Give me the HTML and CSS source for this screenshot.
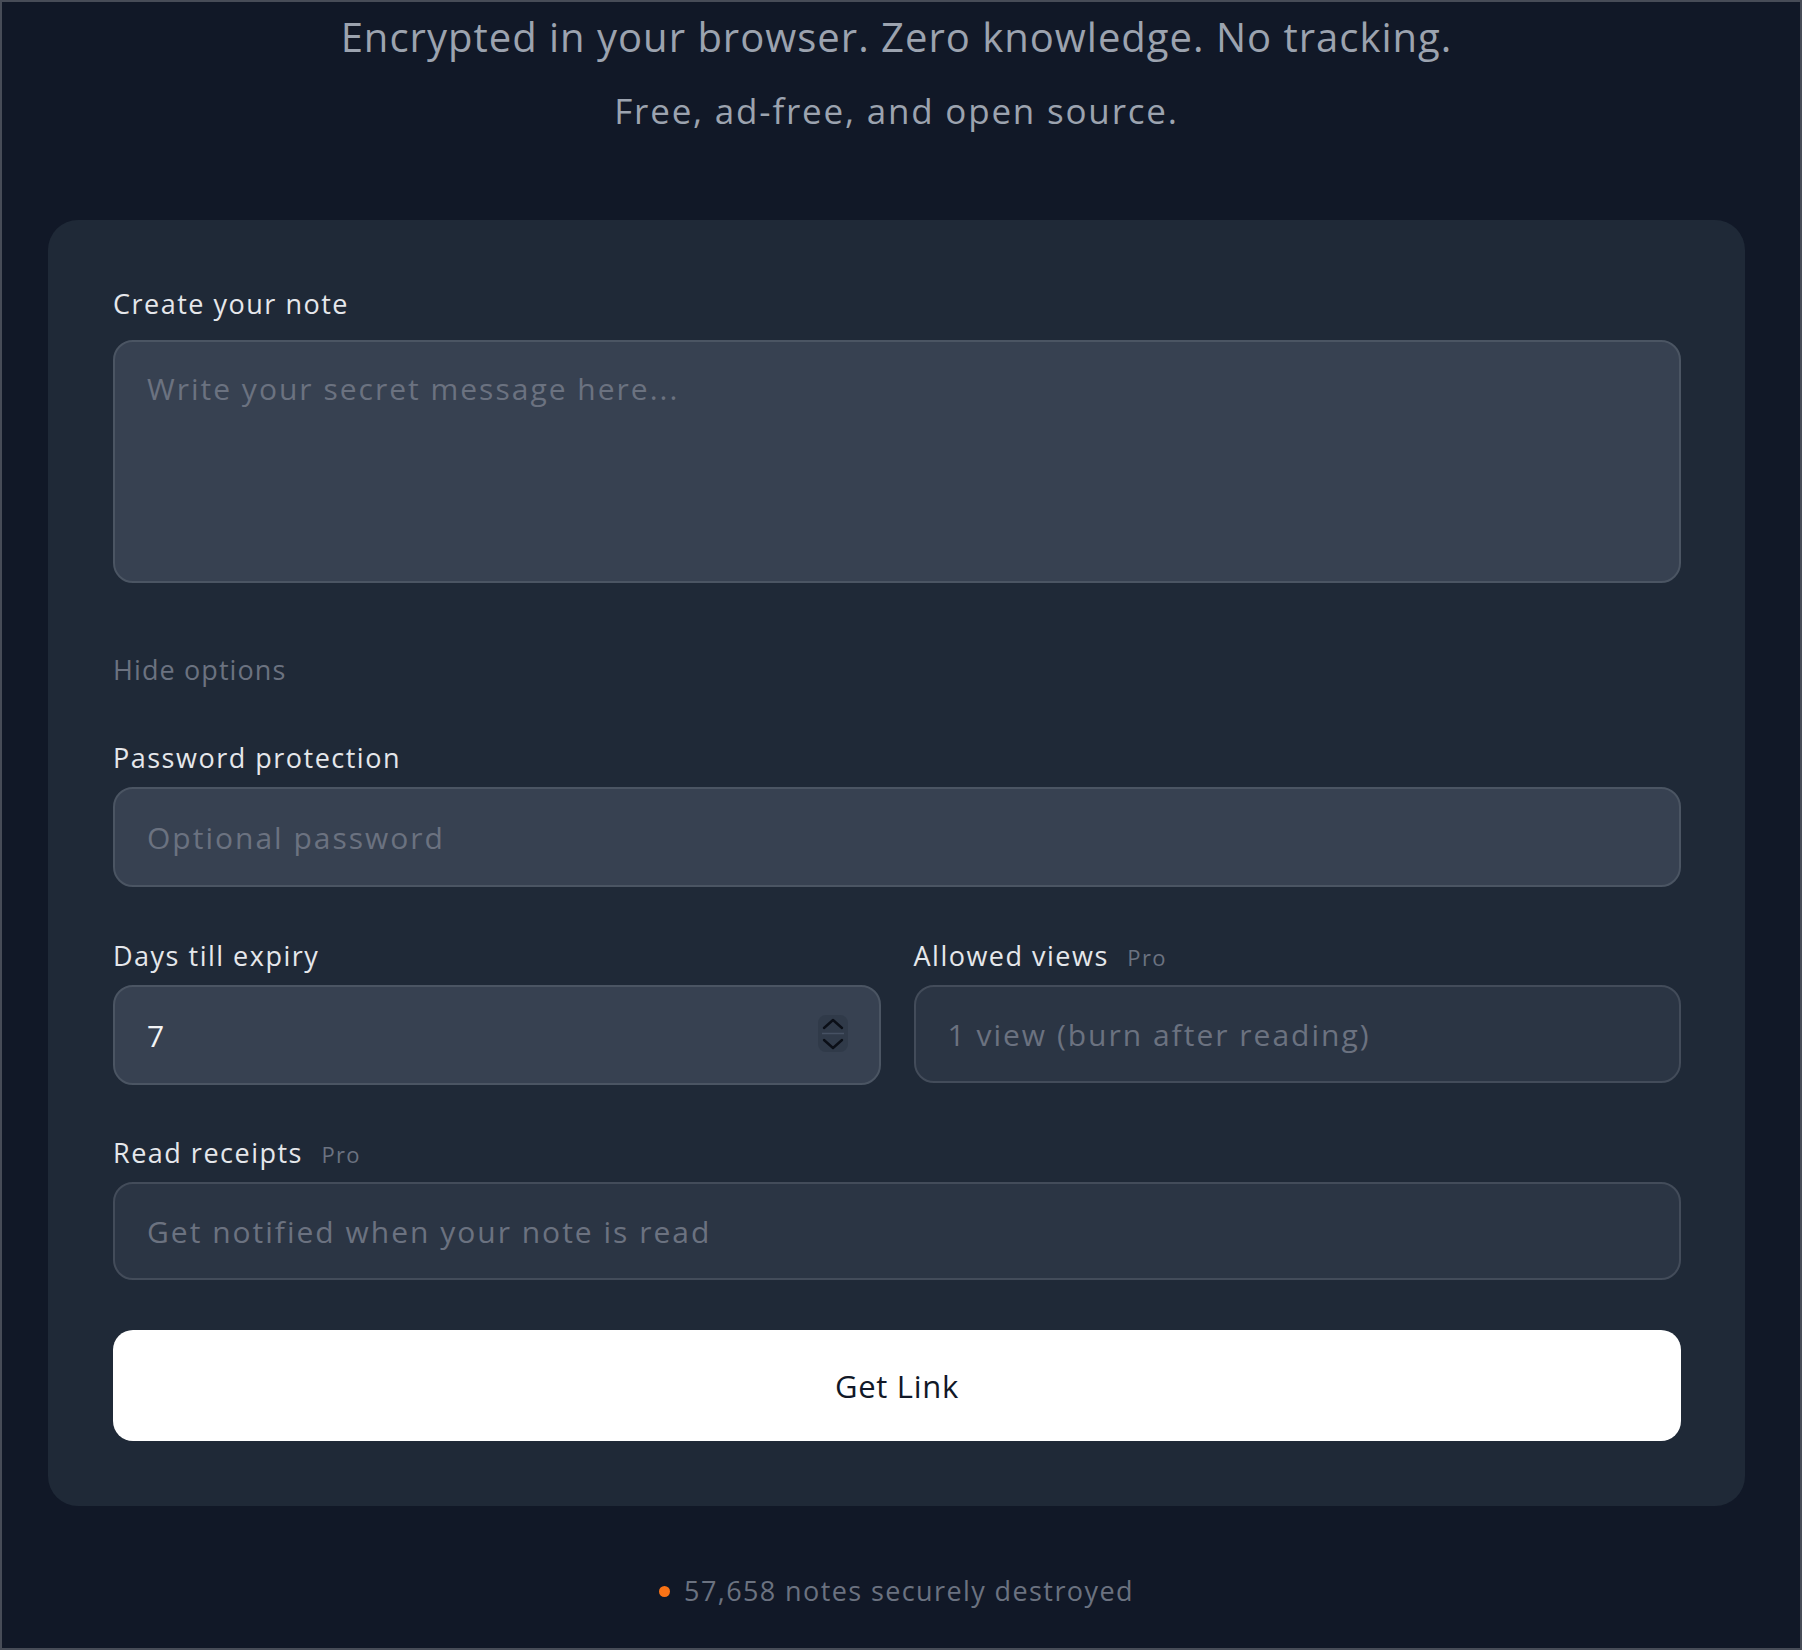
FILE: index.html
```html
<!DOCTYPE html>
<html lang="en">
<head>
    <meta charset="UTF-8">
    <meta name="viewport" content="width=device-width, initial-scale=1.0">
    <title>Secret note</title>
    <link rel="stylesheet" href="styles.css">
</head>
<body>
    <div class="page">
        <header class="intro">
            <p class="tagline">Encrypted in your browser. Zero knowledge. No tracking.</p>
            <p class="subline">Free, ad-free, and open source.</p>
        </header>

        <form class="card">
            <label class="label label-first" for="note">Create your note</label>
            <textarea id="note" class="field textarea" placeholder="Write your secret message here..."></textarea>

            <button type="button" class="toggle">Hide options</button>

            <div class="group">
                <label class="label" for="password">Password protection</label>
                <input id="password" class="field" type="password" placeholder="Optional password">
            </div>

            <div class="row">
                <div class="group">
                    <label class="label" for="expiry">Days till expiry</label>
                    <div class="number-wrap">
                        <input id="expiry" class="field number" type="number" value="7">
                        <span class="spinner">
                            <svg width="30" height="37" viewBox="0 0 30 37">
                                <path d="M6 13 L15 5 L24 13" fill="none" stroke="#0b0f17" stroke-width="2.4" stroke-linecap="round" stroke-linejoin="round"/>
                                <line x1="4" y1="18.5" x2="26" y2="18.5" stroke="#465163" stroke-width="1.5"/>
                                <path d="M6 25 L15 33 L24 25" fill="none" stroke="#0b0f17" stroke-width="2.4" stroke-linecap="round" stroke-linejoin="round"/>
                            </svg>
                        </span>
                    </div>
                </div>
                <div class="group">
                    <label class="label" for="views">Allowed views <span class="pro">Pro</span></label>
                    <input id="views" class="field disabled" type="text" placeholder="1 view (burn after reading)" disabled>
                </div>
            </div>

            <div class="group group-receipts">
                <label class="label" for="receipts">Read receipts <span class="pro">Pro</span></label>
                <input id="receipts" class="field disabled" type="text" placeholder="Get notified when your note is read" disabled>
            </div>

            <button type="button" class="submit">Get Link</button>
        </form>

        <footer class="stats">
            <span class="dot"></span>
            <span>57,658 notes securely destroyed</span>
        </footer>
    </div>
</body>
</html>
```

FILE: styles.css
```css
* {
    margin: 0;
    padding: 0;
    box-sizing: border-box;
}

body {
    background: #111827;
    font-family: 'Open Sans', 'DejaVu Sans', sans-serif;
    color: #e5e7eb;
}

.page {
    height: 1650px;
    border: 2px solid #474c57;
    padding: 8px 55px 0 46px;
    overflow: hidden;
}

.intro {
    text-align: center;
    color: #9ca3af;
}

.tagline {
    font-size: 40px;
    line-height: 54px;
    letter-spacing: 1px;
}

.subline {
    font-size: 35px;
    line-height: 46px;
    letter-spacing: 1.8px;
    margin-top: 24px;
}

.card {
    margin-top: 86px;
    background: #1f2937;
    border-radius: 30px;
    padding: 66px 64px 65px 65px;
    display: flex;
    flex-direction: column;
}

.label {
    display: block;
    font-size: 27px;
    line-height: 36px;
    font-weight: 500;
    letter-spacing: 1.5px;
    color: #e5e7eb;
    margin-bottom: 11px;
}

.label-first {
    margin-bottom: 18px;
}

.pro {
    font-size: 22px;
    line-height: 1;
    font-weight: 400;
    letter-spacing: 1.3px;
    color: #6b7280;
    margin-left: 10px;
}

.field {
    display: block;
    width: 100%;
    height: 100px;
    background: #374151;
    border: 2px solid #4b5563;
    border-radius: 20px;
    padding: 0 32px;
    font-family: inherit;
    font-size: 30px;
    letter-spacing: 2px;
    color: #f3f4f6;
    outline: none;
}

.field::placeholder {
    color: #6b7280;
}

.textarea {
    height: 243px;
    padding-top: 26px;
    resize: none;
}

.toggle {
    align-self: flex-start;
    background: none;
    border: none;
    font-family: inherit;
    font-size: 27px;
    line-height: 36px;
    letter-spacing: 1.1px;
    color: #6b7280;
    margin-top: 69px;
    cursor: pointer;
}

.group {
    margin-top: 52px;
}

.row .group {
    margin-top: 51px;
}

.group-receipts {
    margin-top: 50px;
}

.row {
    display: grid;
    grid-template-columns: 1fr 1fr;
    gap: 33px;
}

.number-wrap {
    position: relative;
}

.number {
    -moz-appearance: textfield;
}

.number::-webkit-inner-spin-button,
.number::-webkit-outer-spin-button {
    -webkit-appearance: none;
    margin: 0;
}

.spinner {
    position: absolute;
    right: 33px;
    top: 30px;
    width: 30px;
    height: 37px;
    background: #303a49;
    border-radius: 8px;
    display: flex;
}

.disabled {
    background: #2b3544;
    border-color: #434c5a;
    height: 98px;
}

.submit {
    margin-top: 50px;
    height: 111px;
    background: #fff;
    border: none;
    border-radius: 20px;
    font-family: inherit;
    font-size: 31px;
    font-weight: 500;
    letter-spacing: 0.7px;
    color: #111827;
    cursor: pointer;
}

.stats {
    margin-top: 67px;
    display: flex;
    justify-content: center;
    align-items: center;
    gap: 14px;
    font-size: 27px;
    line-height: 36px;
    letter-spacing: 1.4px;
    color: #6b7280;
}

.dot {
    width: 11px;
    height: 11px;
    border-radius: 50%;
    background: #f97316;
}
```
